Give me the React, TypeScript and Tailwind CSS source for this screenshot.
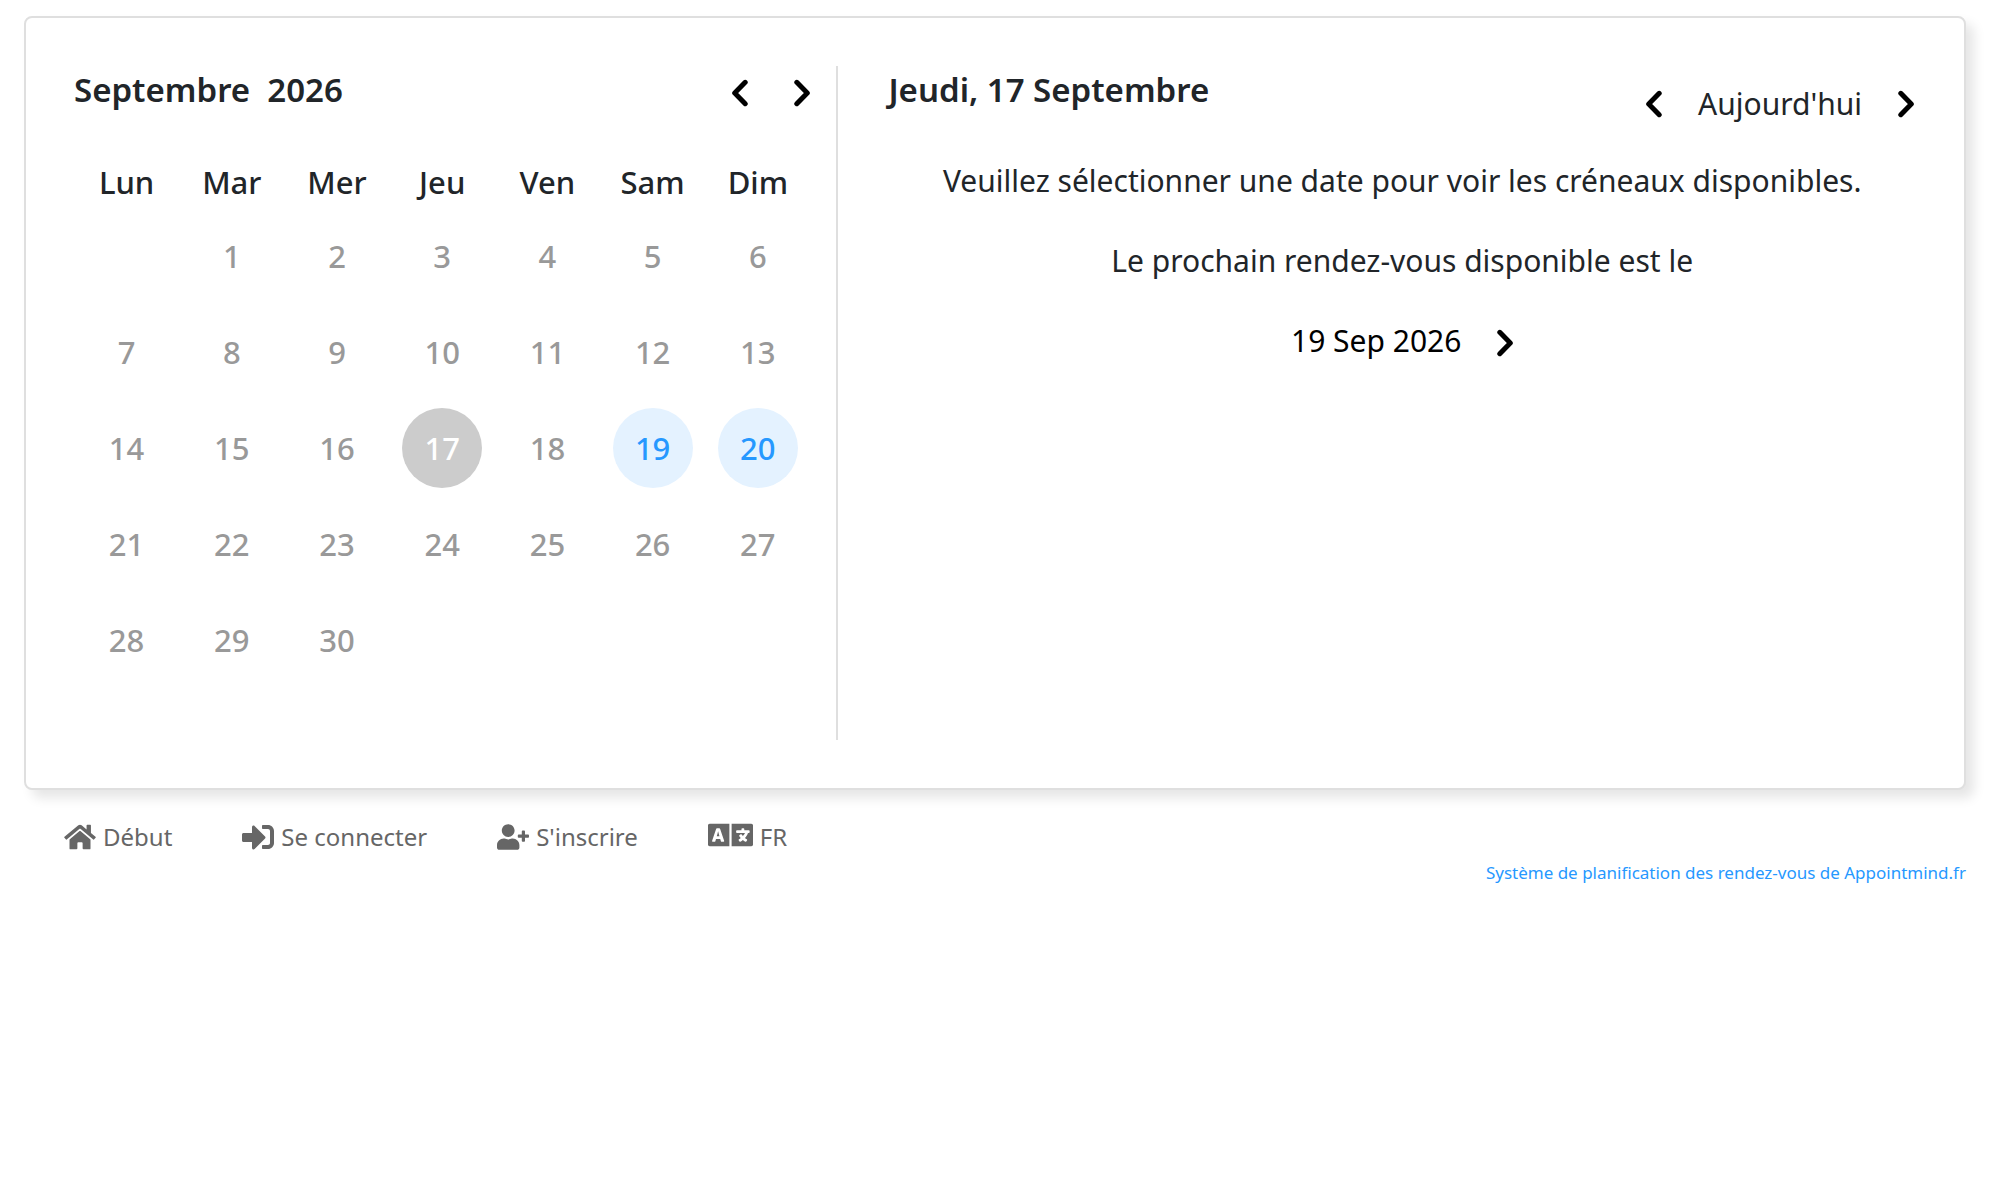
import { useState } from 'react';
import { FaHome, FaLanguage, FaSignInAlt, FaUserPlus } from 'react-icons/fa';
import clsx from 'clsx';

const weekdays = ['Lun', 'Mar', 'Mer', 'Jeu', 'Ven', 'Sam', 'Dim'];

const weeks: (number | null)[][] = [
  [null, 1, 2, 3, 4, 5, 6],
  [7, 8, 9, 10, 11, 12, 13],
  [14, 15, 16, 17, 18, 19, 20],
  [21, 22, 23, 24, 25, 26, 27],
  [28, 29, 30, null, null, null, null],
];

const availableDays = [19, 20];

function Chevron({ direction }: { direction: 'left' | 'right' }) {
  return (
    <svg viewBox="0 0 16 28" className="h-7 w-4" fill="none" stroke="black" strokeWidth="5" strokeLinecap="round" strokeLinejoin="round" aria-hidden="true">
      <path d={direction === 'left' ? 'M13.2 3.3 2.7 14l10.5 10.7' : 'M2.8 3.3 13.3 14 2.8 24.7'} />
    </svg>
  );
}

interface DayCellProps {
  day: number;
  selected: boolean;
  available: boolean;
  onSelect: (day: number) => void;
}

function DayCell({ day, selected, available, onSelect }: DayCellProps) {
  return (
    <button
      type="button"
      onClick={() => onSelect(day)}
      className={clsx(
        'size-20 rounded-full text-[31px] leading-10 font-medium',
        selected && 'bg-[#cccccc] text-white',
        !selected && available && 'bg-[#e4f2ff] text-[#2698ff]',
        !selected && !available && 'text-[#999999]'
      )}
    >
      {day}
    </button>
  );
}

function Calendar({ selectedDay, onSelect }: { selectedDay: number; onSelect: (day: number) => void }) {
  return (
    <section className="w-[41.5%] border-r-2 border-[#dfdfdf] pr-[26px] pb-[52px]">
      <div className="flex h-12 items-center justify-between">
        <h2 className="text-[33px] leading-12 font-semibold whitespace-pre">Septembre  2026</h2>
        <div className="flex gap-[46px] pt-1.5">
          <button type="button" aria-label="Mois précédent">
            <Chevron direction="left" />
          </button>
          <button type="button" aria-label="Mois suivant">
            <Chevron direction="right" />
          </button>
        </div>
      </div>

      <table className="mt-8 w-full table-fixed text-center">
        <thead>
          <tr className="h-[62px] align-top">
            {weekdays.map((name) => (
              <th key={name} scope="col" className="pt-3 text-[31px] leading-12 font-medium">
                {name}
              </th>
            ))}
          </tr>
        </thead>
        <tbody>
          {weeks.map((week, i) => (
            <tr key={i} className="h-24">
              {week.map((day, j) => (
                <td key={j} className="p-0">
                  {day && (
                    <DayCell
                      day={day}
                      selected={day === selectedDay}
                      available={availableDays.includes(day)}
                      onSelect={onSelect}
                    />
                  )}
                </td>
              ))}
            </tr>
          ))}
        </tbody>
      </table>
    </section>
  );
}

function DayPanel() {
  return (
    <section className="flex-1 pl-[50px]">
      <div className="flex justify-between pr-0.5">
        <h2 className="text-[33px] leading-12 font-semibold">Jeudi, 17 Septembre</h2>
        <div className="flex items-center gap-9 pt-3.5">
          <button type="button" aria-label="Jour précédent">
            <Chevron direction="left" />
          </button>
          <span className="text-[30px] leading-12">Aujourd'hui</span>
          <button type="button" aria-label="Jour suivant">
            <Chevron direction="right" />
          </button>
        </div>
      </div>

      <div className="mt-[29px] space-y-8 text-center text-[30px] leading-12">
        <p>Veuillez sélectionner une date pour voir les créneaux disponibles.</p>
        <p>Le prochain rendez-vous disponible est le</p>
        <button type="button" className="mx-auto flex items-center gap-9 text-black">
          19 Sep 2026
          <span className="pt-1">
            <Chevron direction="right" />
          </span>
        </button>
      </div>
    </section>
  );
}

export default function App() {
  const [selectedDay, setSelectedDay] = useState(17);

  return (
    <div className="px-6 pt-4 font-['Noto_Sans',sans-serif] text-[#212529]">
      {/* Booking card */}
      <main className="flex rounded-lg border-2 border-[#dfdfdf] bg-white p-12 shadow-[8px_8px_12px_rgba(0,0,0,0.1)]">
        <Calendar selectedDay={selectedDay} onSelect={setSelectedDay} />
        <DayPanel />
      </main>

      {/* Footer links */}
      <nav className="flex gap-[70px] px-10 pt-[27px] text-[24px] leading-10 text-[#666666]">
        <a href="#" className="flex items-center gap-[7px]">
          <FaHome className="h-7 w-8" />
          Début
        </a>
        <a href="#" className="flex items-center gap-[7px]">
          <FaSignInAlt className="size-8" />
          Se connecter
        </a>
        <a href="#" className="flex items-center gap-[7px]">
          <FaUserPlus className="h-[26px] w-8" />
          S'inscrire
        </a>
        <a href="#" className="flex items-start gap-[7px]">
          <FaLanguage className="h-9 w-[45px]" />
          FR
        </a>
      </nav>
      <div className="text-right text-[17px] leading-8 text-[#2698ff]">
        <a href="#">Système de planification des rendez-vous de Appointmind.fr</a>
      </div>
    </div>
  );
}
